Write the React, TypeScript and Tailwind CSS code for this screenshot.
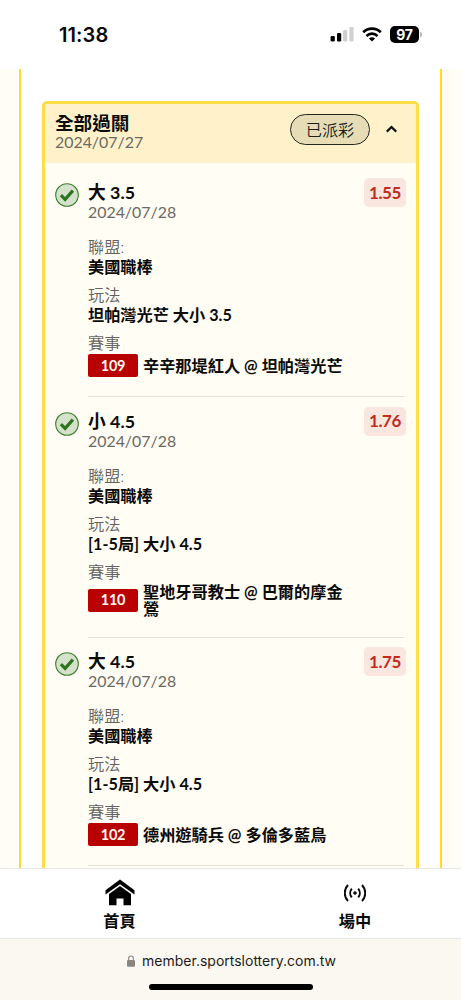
import { useState } from "react";

type Bet = {
  id: string;
  pick: string;
  date: string;
  odds: string;
  market: string;
  match: string;
};

const bets: Bet[] = [
  { id: "109", pick: "大 3.5", date: "2024/07/28", odds: "1.55", market: "坦帕灣光芒 大小 3.5", match: "辛辛那堤紅人 @ 坦帕灣光芒" },
  { id: "110", pick: "小 4.5", date: "2024/07/28", odds: "1.76", market: "[1-5局] 大小 4.5", match: "聖地牙哥教士 @ 巴爾的摩金鶯" },
  { id: "102", pick: "大 4.5", date: "2024/07/28", odds: "1.75", market: "[1-5局] 大小 4.5", match: "德州遊騎兵 @ 多倫多藍鳥" },
];

function StatusBar() {
  return (
    <header className="flex h-[69px] shrink-0 items-center justify-between bg-white pr-[39px] pl-[59px] font-['Inter',sans-serif]">
      <span className="text-[20px] leading-6 font-semibold tracking-[0.1px] text-[#080808]">11:38</span>
      <div className="flex items-center">
        <svg width="24" height="15" viewBox="0 0 24 15" className="mr-[8px]">
          <rect x="0.6" y="9" width="4.2" height="5.5" rx="1.2" />
          <rect x="7" y="6" width="4.2" height="8.5" rx="1.2" />
          <rect x="13" y="3" width="4.2" height="11.5" rx="1.2" fill="#d0d0d0" />
          <rect x="19.4" y="0" width="4.2" height="14.5" rx="1.2" fill="#d0d0d0" />
        </svg>
        <svg width="20" height="15" viewBox="0 0 20 15" fill="none" stroke="#000" strokeWidth="2.7" className="mr-[8px]">
          <path d="M1.2 5.2a12.7 12.7 0 0 1 17.6 0" />
          <path d="M4.5 8.9a8 8 0 0 1 11 0" />
          <path d="M10 14.6 6.9 11.6a4.5 4.5 0 0 1 6.2 0Z" fill="#000" stroke="none" />
        </svg>
        <span className="flex h-[17px] w-[29px] items-center justify-center rounded-[5px] bg-black text-[14px] font-bold tracking-[-0.3px] text-white">97</span>
        <span className="ml-px h-[5px] w-[2px] rounded-r-full bg-[#b5b5b5]" />
      </div>
    </header>
  );
}

function Label({ children }: { children: React.ReactNode }) {
  return <div className="h-5 font-[350] text-[#63615c]">{children}</div>;
}

function BetItem({ bet, first }: { bet: Bet; first: boolean }) {
  return (
    <li className={first ? "flex pt-[19px]" : "flex pt-[13.5px]"}>
      <svg width="24" height="24" viewBox="0 0 24 24" className="mt-[1px] mr-[9px] shrink-0">
        <circle cx="12" cy="12" r="11.3" fill="#d5e2cb" stroke="#3d7f31" strokeWidth="1.1" />
        <path d="m5.9 12.1 4.2 4.3 7.8-8.8" fill="none" stroke="#2c741f" strokeWidth="3.1" />
      </svg>
      <div className="relative w-[316px] border-b border-[#e5e2dc] pb-[19px]">
        <div className="h-5 text-[17.8px] font-bold">{bet.pick}</div>
        <div className="h-[35px] text-[15.9px] text-[#6b6963]">{bet.date}</div>
        <span className="absolute -top-1 -right-[2px] flex h-[29px] w-[42px] items-center justify-center rounded-[5px] bg-[#f8e6df] text-[17px] font-bold tracking-[-0.4px] text-[#c32a22]">
          {bet.odds}
        </span>
        <Label>聯盟:</Label>
        <div className="h-7 font-bold">美國職棒</div>
        <Label>玩法</Label>
        <div className="h-7 font-bold">{bet.market}</div>
        <Label>賽事</Label>
        <div className="mt-px flex items-center gap-[5px]">
          <span className="flex h-[23px] w-[50px] shrink-0 items-center justify-center rounded-[2px] bg-[#b80000] text-[14.5px] font-bold tracking-[-0.3px] text-[#fff8f0]">
            {bet.id}
          </span>
          <span className="w-[206px] leading-[17.5px] font-bold">{bet.match}</span>
        </div>
      </div>
    </li>
  );
}

export default function App() {
  const [open, setOpen] = useState(true);

  return (
    <div className="flex h-[1000px] w-[461px] flex-col overflow-hidden bg-white font-['Lato','Noto_Sans_CJK_TC',sans-serif] text-[16.2px] leading-5 text-[#0b0b0b]">
      <StatusBar />

      {/* Scrolling content, cut off by the tab bar */}
      <main className="h-[799px] shrink-0 overflow-hidden bg-[#fffdf5] px-[19px]">
        <div className="h-[860px] border-x-2 border-[#ffd92e] bg-white px-[21px] pt-[32px]">
          <section className="h-[900px] w-[377px] overflow-hidden rounded-[5px] border-3 border-[#ffdd45] bg-[#fffdf4]">
            <div className="flex h-[59px] items-start bg-[#fff2ca] pl-[10px]">
              <div className="flex-1 pt-[9px]">
                <h1 className="h-[19px] text-[18.6px] font-bold">全部過關</h1>
                <p className="text-[15.9px] text-[#6b6963]">2024/07/27</p>
              </div>
              <span className="mt-[10px] flex h-[31px] w-[80px] items-center justify-center rounded-full border-[1.4px] border-[#25251d] bg-[#e6dcb6] font-[350] text-[#1d1d18]">
                已派彩
              </span>
              <button className="mt-[19px] mr-[18px] ml-[15px]" onClick={() => setOpen(!open)}>
                <svg width="13" height="12" viewBox="0 0 13 12" fill="none" stroke="#111" strokeWidth="2.2">
                  <path d={open ? "m1.8 8.6 4.7-4.6 4.7 4.6" : "m1.8 4 4.7 4.6 4.7-4.6"} />
                </svg>
              </button>
            </div>
            {open && (
              <ul className="pl-[10px]">
                {bets.map((bet, i) => (
                  <BetItem key={bet.id} bet={bet} first={i === 0} />
                ))}
              </ul>
            )}
          </section>
        </div>
      </main>

      {/* Tab bar */}
      <nav className="flex h-[71px] shrink-0 border-y border-[#e6e6e4] bg-white font-bold">
        <a className="flex w-[239px] flex-col items-center pt-[10px]">
          <svg width="30" height="28" viewBox="0 0 30 28">
            <path d="M15 .5 29.5 11.2v4.3L15 5.2.5 15.5v-4.3Z" />
            <path d="M15 7 26 15v11.3h-7.5V19.5h-7v6.8H4V15Z" />
          </svg>
          <span className="mt-[4px]">首頁</span>
        </a>
        <a className="flex w-[222px] flex-col items-center pt-[14px] pl-[10px]">
          <svg width="22" height="20" viewBox="0 0 22 20" fill="none" stroke="#0b0b0b" strokeWidth="2">
            <circle cx="11" cy="10" r="1.8" fill="#0b0b0b" stroke="none" />
            <path d="M7.8 5.6a6.8 6.8 0 0 0 0 8.8M14.2 5.6a6.8 6.8 0 0 1 0 8.8" />
            <path d="M4 2a11.5 11.5 0 0 0 0 16M18 2a11.5 11.5 0 0 1 0 16" />
          </svg>
          <span className="mt-[8px]">場中</span>
        </a>
      </nav>

      {/* Browser address bar */}
      <footer className="flex flex-1 flex-col items-center bg-[#fbf8f1] pt-[12px]">
        <div className="flex items-center gap-[7px] pl-[2px] font-['Inter',sans-serif] text-[14px] text-[#1c1c1b]">
          <svg width="8" height="12" viewBox="0 0 8 12">
            <rect y="5" width="8" height="6.8" rx="1.2" fill="#88867f" />
            <path d="M1.7 5.4V3.3a2.3 2.3 0 0 1 4.6 0v2.1" fill="none" stroke="#88867f" strokeWidth="1.1" />
          </svg>
          member.sportslottery.com.tw
        </div>
        <div className="mt-[13px] h-[6px] w-[164px] rounded-full bg-black" />
      </footer>
    </div>
  );
}
